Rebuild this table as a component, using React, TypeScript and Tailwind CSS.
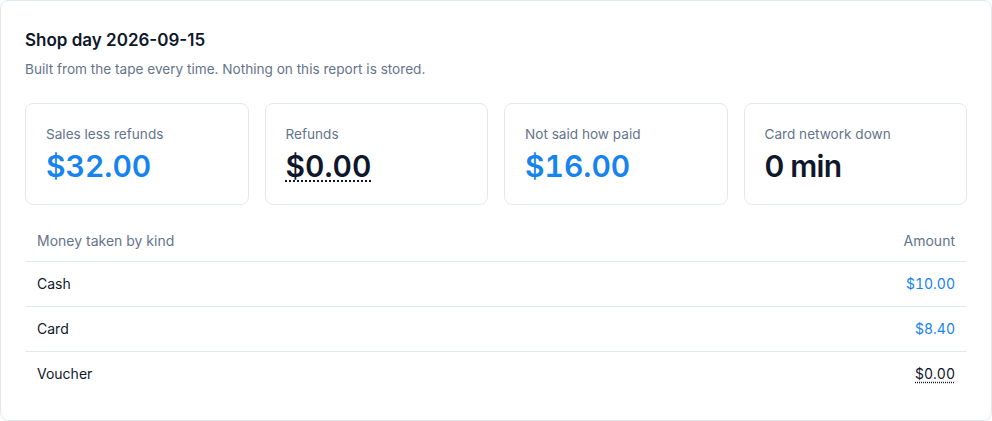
const stats = [
  { label: "Sales less refunds", value: "$32.00", tone: "blue" },
  { label: "Refunds", value: "$0.00", tone: "zero" },
  { label: "Not said how paid", value: "$16.00", tone: "blue" },
  { label: "Card network down", value: "0 min", tone: "plain" },
]

const rows = [
  { kind: "Cash", amount: "$10.00", zero: false },
  { kind: "Card", amount: "$8.40", zero: false },
  { kind: "Voucher", amount: "$0.00", zero: true },
]

export default function App() {
  return (
    <div className="min-h-screen bg-white font-['Inter',sans-serif] text-[#0f172a]">
      <div className="rounded-lg border border-[#e2e8f0] bg-white p-6">
        {/* Heading */}
        <h1 className="text-[17px] font-semibold leading-[30px]">Shop day 2026-09-15</h1>
        <p className="mt-1 text-[13.6px] leading-5 text-[#64748b]">
          Built from the tape every time. Nothing on this report is stored.
        </p>

        {/* Stat cards */}
        <div className="mt-6 grid grid-cols-4 gap-4">
          {stats.map((s) => (
            <div key={s.label} className="rounded-lg border border-[#e2e8f0] px-5 pt-5 pb-5">
              <div className="text-[13.6px] leading-5 text-[#64748b]">{s.label}</div>
              <div
                className={
                  s.tone === "blue"
                    ? "mt-1 text-3xl font-semibold leading-9 tabular-nums text-[#1683ef]"
                    : s.tone === "zero"
                      ? "mt-1 text-3xl font-semibold leading-9 tabular-nums"
                      : "mt-1 text-3xl font-semibold leading-9 tracking-tight"
                }
              >
                {s.tone === "zero" ? (
                  <span className="underline decoration-dotted decoration-2 underline-offset-[3px]">{s.value}</span>
                ) : (
                  s.value
                )}
              </div>
            </div>
          ))}
        </div>

        {/* Money by kind */}
        <table className="mt-4 w-full text-sm leading-5">
          <thead>
            <tr className="border-b border-[#e2e8f0] text-[#64748b]">
              <th className="px-3 py-2.5 text-left font-normal">Money taken by kind</th>
              <th className="px-3 py-2.5 text-right font-normal">Amount</th>
            </tr>
          </thead>
          <tbody>
            {rows.map((r, i) => (
              <tr key={r.kind} className={i < rows.length - 1 ? "border-b border-[#e2e8f0]" : ""}>
                <td className="px-3 py-3">{r.kind}</td>
                <td className="px-3 py-3 text-right tabular-nums">
                  {r.zero ? (
                    <span className="underline decoration-dotted underline-offset-[3px]">{r.amount}</span>
                  ) : (
                    <span className="text-[#1683ef]">{r.amount}</span>
                  )}
                </td>
              </tr>
            ))}
          </tbody>
        </table>
      </div>
    </div>
  )
}
